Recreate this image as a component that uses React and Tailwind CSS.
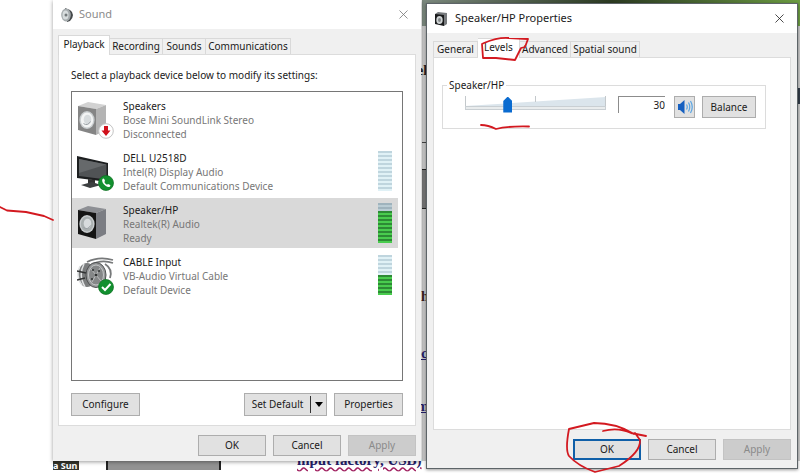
import React from "react";
import { X } from "lucide-react";

const BUTTON =
  "flex items-center justify-center border border-[#adadad] bg-[#e1e1e1] text-[#1a1a1a] whitespace-nowrap";

const SEGMENTS = [0, 1, 2, 3, 4, 5, 6, 7, 8, 9];

const DEVICES = [
  { name: "Speakers", driver: "Bose Mini SoundLink Stereo", status: "Disconnected", Icon: FadedSpeaker, level: null },
  { name: "DELL U2518D", driver: "Intel(R) Display Audio", status: "Default Communications Device", Icon: Monitor, level: 0 },
  { name: "Speaker/HP", driver: "Realtek(R) Audio", status: "Ready", Icon: Speaker, level: 8, selected: true },
  { name: "CABLE Input", driver: "VB-Audio Virtual Cable", status: "Default Device", Icon: Cable, level: 5 },
];

function SpeakerBox({ front, side, top, cone }) {
  return (
    <>
      <path d="M1 7 L11 3 L29 6 L19 10 Z" fill={top} />
      <path d="M19 10 L29 6 V31 L19 36 Z" fill={side} />
      <path d="M1 7 L19 10 V36 L1 31 Z" fill={front} />
      <ellipse cx="10" cy="21" rx="7.6" ry="9" fill="#c9cdcf" />
      <ellipse cx="10" cy="21" rx="6.2" ry="7.6" fill={cone} />
      <ellipse cx="10.5" cy="20.5" rx="3.8" ry="4.8" fill="#d7dbdd" />
      <path d="M6.500 24.500 Q10.500 27.500 13.500 22.500" fill="none" stroke="#9ba1a5" strokeWidth="1" />
    </>
  );
}

function FadedSpeaker() {
  return (
    <svg viewBox="0 0 38 40" className="h-10 w-[38px]" aria-hidden="true">
      <SpeakerBox front="#858585" side="#b4b4b4" top="#d2d2d2" cone="#f3f4f4" />
      <circle cx="29" cy="32" r="7.3" fill="#fff" stroke="#c4c4c4" />
      <path d="M27 27 h4 v4.500 h2.500 L29 37 L24.500 31.500 H27 Z" fill="#d0101b" />
    </svg>
  );
}

function Speaker() {
  return (
    <svg viewBox="0 0 38 40" className="h-10 w-[38px]" aria-hidden="true">
      <SpeakerBox front="#141414" side="#7b7d83" top="#8d8f94" cone="#aab0b1" />
    </svg>
  );
}

function Monitor() {
  return (
    <svg viewBox="0 0 38 40" className="h-10 w-[38px]" aria-hidden="true">
      <path d="M0 5 L31 12 V31 L0 27 Z" fill="#1d1f20" />
      <path d="M2 8 L29.500 13.500 V28.500 L2 25 Z" fill="#505355" />
      <path d="M2 8 L29.500 13.500 L2 22 Z" fill="#66696b" />
      <path d="M11 28 L18 29 V34 L11 33 Z" fill="#333" />
      <path d="M4 34 L15 31 L24 34 L13 37 Z" fill="#3c3f40" />
      <circle cx="29" cy="32" r="7.500" fill="#12902f" stroke="#0b6f20" strokeWidth="0.700" />
      <path d="M25.500 28 Q26.500 27 27.500 28.500 L28 30 L27.300 31 Q28.300 33 30 33.800 L31 33 L32.800 33.700 Q34 34.500 33 35.500 Q31.500 37 28.500 34.800 Q24 31 25.500 28 Z" fill="#fff" />
    </svg>
  );
}

function Cable() {
  return (
    <svg viewBox="0 0 38 40" className="h-10 w-[38px]" aria-hidden="true">
      <path d="M10 7 Q22 1 36 5 M14 10 Q24 4 36 8 M28 9 Q36 14 33 23" fill="none" stroke="#77797a" strokeWidth="1.800" />
      <ellipse cx="10" cy="20" rx="9" ry="12" fill="#7b7d7e" />
      <path d="M3 11 Q-2 20 5 30 M7 9 Q1 20 8 32" fill="none" stroke="#e2e4e5" strokeWidth="1.500" />
      <path d="M0 16 L9 18 M0 25 L8 23" stroke="#303232" strokeWidth="1.500" />
      <ellipse cx="19" cy="20" rx="10" ry="12.500" fill="#969899" stroke="#4d4f50" />
      <ellipse cx="19" cy="20" rx="7.500" ry="10" fill="#858788" stroke="#c5c7c8" />
      <path d="M14 14 L24 26 M23 13 L15 27" stroke="#b9bbbc" />
      <g fill="#2e3030">
        <circle cx="16" cy="15" r="1" />
        <circle cx="22" cy="16" r="1" />
        <circle cx="19" cy="20" r="1.200" />
        <circle cx="15" cy="24" r="1" />
      </g>
      <circle cx="29" cy="32" r="7.500" fill="#12902f" stroke="#0b6f20" strokeWidth="0.700" />
      <path d="M25 32 L28 35 L33.500 29" fill="none" stroke="#fff" strokeWidth="2" />
    </svg>
  );
}

function Meter({ level, selected }) {
  const off = selected
    ? "h-1 border-t-2 border-[#9fb3bd] bg-[#b9ccd4]"
    : "h-1 border-t-2 border-[#bfd5de] bg-[#e0f1f6]";
  return (
    <div className="flex w-3.5 flex-col">
      {SEGMENTS.map((i) => (
        <div
          key={i}
          className={i >= SEGMENTS.length - level ? "h-1 border-t-2 border-[#2d8a35] bg-[#49cc4e]" : off}
        />
      ))}
    </div>
  );
}

function TitleIcon({ round }) {
  return round ? (
    <svg viewBox="0 0 12 14" className="h-3.5 w-3" aria-hidden="true">
      <path d="M4 0 L9 2 Q12 4 12 7 Q12 10 9 13 L6 14 Z" fill="#45494b" />
      <ellipse cx="5" cy="7" rx="4.800" ry="6.500" fill="#a5abad" />
      <ellipse cx="4.500" cy="7" rx="3" ry="4.500" fill="#d7dcdd" />
      <circle cx="5" cy="7" r="1.500" fill="#73797b" />
    </svg>
  ) : (
    <svg viewBox="0 0 12 14" className="h-3.5 w-3" aria-hidden="true">
      <path d="M0 2 L3 0 L12 1 V12 L9 14 Z" fill="#777a7d" />
      <path d="M0 2 L9 3 V14 L0 12 Z" fill="#191a1b" />
      <ellipse cx="4.500" cy="8" rx="3.200" ry="4" fill="#cfd3d4" />
      <ellipse cx="4.500" cy="8" rx="1.500" ry="2" fill="#85898b" />
    </svg>
  );
}

function Tabs({ items, active, first }) {
  return (
    <div role="tablist" className="flex items-end">
      {items.map(([label, width]) => (
        <button
          key={label}
          role="tab"
          aria-selected={label === active}
          className={`${width} ${
            label === active
              ? "relative -mb-px h-5 border-b-0 bg-white pb-0.5"
              : "h-4 bg-[#f0f0f0]"
          } ${label === first ? "border-l" : ""} flex items-center justify-center border-t border-r border-[#d9d9d9] whitespace-nowrap`}
        >
          {label}
        </button>
      ))}
    </div>
  );
}

function Footer({ focused }) {
  return (
    <div className="flex justify-end gap-[7px]">
      <button className={`${BUTTON} h-[21px] w-[68px] ${focused ? "outline-2 -outline-offset-2 outline-[#0f5fa8]" : ""}`}>OK</button>
      <button className={`${BUTTON} h-[21px] w-[68px]`}>Cancel</button>
      <button disabled className="flex h-[21px] w-[68px] items-center justify-center border border-[#c3c3c3] bg-[#cccccc] text-[#8a8a8a]">
        Apply
      </button>
    </div>
  );
}

function SoundDialog() {
  return (
    <section aria-label="Sound" className="relative ml-[53px] flex min-w-0 flex-[369] flex-col self-start bg-[#f0f0f0] shadow-[0_1px_4px_rgba(0,0,0,0.4)]">
      <header className="flex h-[29px] items-center gap-1.5 bg-white pr-2.5 pl-2">
        <TitleIcon round />
        <h1 className="flex-1 text-[11px] text-[#8b8b8b]">Sound</h1>
        <button aria-label="Close">
          <X size={15} strokeWidth={1.3} className="text-[#777]" />
        </button>
      </header>
      <div className="px-[5px] pt-1.5 pb-[5px]">
        <Tabs
          active="Playback"
          first="Playback"
          items={[
            ["Playback", "w-[52px]"],
            ["Recording", "w-[53px]"],
            ["Sounds", "w-[43px]"],
            ["Communications", "w-[85px]"],
          ]}
        />
        <div className="mb-[9px] border border-[#dcdcdc] bg-white px-3 pt-[13px] pb-[9px]">
          <p className="mb-[9px] leading-[14px]">Select a playback device below to modify its settings:</p>
          <ul role="listbox" aria-label="Playback devices" className="min-h-[290px] border border-[#767676] pt-0.5">
            {DEVICES.map(({ name, driver, status, Icon, level, selected }) => (
              <li
                key={name}
                role="option"
                aria-selected={!!selected}
                className={`mr-1 flex h-[52px] items-start gap-2 border-b-2 border-white pt-[5px] pr-[6px] pl-[5px] ${selected ? "bg-[#d9d9d9]" : ""}`}
              >
                <Icon />
                <div className="min-w-0 flex-1 leading-[14px] whitespace-nowrap">
                  <p className="text-[#1a1a1a]">{name}</p>
                  <p className="text-[#777]">{driver}</p>
                  <p className="text-[#777]">{status}</p>
                </div>
                {level !== null && <Meter level={level} selected={selected} />}
              </li>
            ))}
          </ul>
          <div className="mt-3 flex gap-[7px]">
            <button className={`${BUTTON} mr-auto h-[23px] w-[69px]`}>Configure</button>
            <div className="flex h-[23px] w-[83px] border border-[#adadad] bg-[#e1e1e1]">
              <button className="flex-1">Set Default</button>
              <button aria-label="More defaults" className="my-0.5 flex w-4 items-center justify-center border-l border-[#333]">
                <svg viewBox="0 0 10 5" className="h-[5px] w-2.5" aria-hidden="true">
                  <path d="M1 0 H9 L5 5 Z" fill="#000" />
                </svg>
              </button>
            </div>
            <button className={`${BUTTON} h-[23px] w-[69px]`}>Properties</button>
          </div>
        </div>
        <Footer />
      </div>
    </section>
  );
}

function LevelSlider() {
  return (
    <div className="relative h-[17px] min-w-0 flex-1">
      <svg viewBox="0 0 139 17" preserveAspectRatio="none" className="h-full w-full" aria-hidden="true">
        <path d="M0 10 L139 1 V11 H0 Z" fill="#dbe5ec" />
        <path d="M0.500 0 V10 M69.500 0 V6 M138.500 0 V10" stroke="#c3c8cb" />
        <rect x="0.500" y="10.500" width="138" height="3" fill="#e9eced" stroke="#c9cfd3" />
      </svg>
      <input
        type="range"
        aria-label="Speaker/HP level"
        defaultValue="29"
        className="absolute inset-0 h-full w-full appearance-none bg-transparent [&::-webkit-slider-thumb]:h-4 [&::-webkit-slider-thumb]:w-[9px] [&::-webkit-slider-thumb]:appearance-none [&::-webkit-slider-thumb]:bg-[#0a6bd0] [&::-webkit-slider-thumb]:[clip-path:polygon(50%_0,100%_28%,100%_100%,0_100%,0_28%)]"
      />
    </div>
  );
}

function PropertiesDialog() {
  return (
    <section aria-label="Speaker/HP Properties" className="relative mt-[3px] mr-[2px] ml-[5px] flex min-w-0 flex-[371] flex-col self-start border border-[#5d6468] bg-[#f0f0f0] shadow-[0_1px_3px_rgba(0,0,0,0.4)]">
      <header className="flex h-[29px] items-center gap-2 bg-white pr-2.5 pl-2">
        <TitleIcon />
        <h1 className="flex-1 text-[11px] text-[#1a1a1a]">Speaker/HP Properties</h1>
        <button aria-label="Close">
          <X size={15} strokeWidth={1.3} className="text-[#222]" />
        </button>
      </header>
      <div className="px-1.5 pt-[5px] pb-2">
        <Tabs
          active="Levels"
          first="General"
          items={[
            ["General", "w-[45px]"],
            ["Levels", "w-[42px]"],
            ["Advanced", "w-[51px]"],
            ["Spatial sound", "w-[69px]"],
          ]}
        />
        <div className="mb-[9px] min-h-[373px] border border-[#dcdcdc] bg-white pt-5 pr-6 pl-2">
          <fieldset className="border border-[#dcdcdc] pr-[9px] pb-2.5 pl-[22px]">
            <legend className="-ml-[18px] px-0.5 leading-[14px]">Speaker/HP</legend>
            <div className="flex items-start pt-1">
              <LevelSlider />
              <input
                aria-label="Level"
                defaultValue="30"
                className="ml-3 h-[17px] w-[47px] border-t border-l border-[#8c8c8c] bg-white text-right"
              />
              <button aria-label="Mute" className={`${BUTTON} ml-[9px] h-[22px] w-[21px]`}>
                <svg viewBox="0 0 16 16" className="size-4" aria-hidden="true">
                  <path d="M1 5 H3 L7.500 1 V15 L3 11 H1 Z" fill="#1660c0" />
                  <path d="M9.500 5.500 Q11 8 9.500 10.500 M11.500 3.500 Q14 8 11.500 12.500 M13.500 2 Q17 8 13.500 14" fill="none" stroke="#58a4e4" strokeWidth="1.200" />
                </svg>
              </button>
              <button className={`${BUTTON} ml-[7px] h-[22px] w-[54px]`}>Balance</button>
            </div>
          </fieldset>
        </div>
        <Footer focused />
      </div>
    </section>
  );
}

// Slivers of the document that stay visible around the two windows
function Backdrop() {
  return (
    <div aria-hidden="true" className="absolute inset-0 overflow-hidden font-['Liberation_Serif',serif] text-[14px] font-bold text-[#25206b]">
      <div className="absolute top-0 right-0 bottom-0 left-[422px] bg-[#c9c9c9]" />
      <div className="absolute top-0 right-0 left-[422px] h-[26px] bg-linear-to-r from-[#7d8a80] via-[#2c3b22] to-[#6c9c42]" />
      <div className="absolute top-[142px] left-[422px] h-px w-1.5 bg-[#444]" />
      <div className="absolute top-[169px] left-[422px] h-10 w-1.5 border-y border-[#222] bg-[#777]" />
      <div className="absolute top-[88px] right-0 h-4 w-1 bg-[#333c48]" />
      <span className="absolute top-[60px] left-[417px] text-[#222]">el</span>
      <span className="absolute top-[286px] left-[421px] text-[#3a2020]">h</span>
      <span className="absolute top-[343px] left-[415px] underline">ec</span>
      <span className="absolute top-[396px] left-[417px] underline">m</span>
      <div className="absolute right-0 bottom-0 left-0 h-3 bg-white" />
      <div className="absolute bottom-[3px] left-[53px] h-[9px] bg-[#34352c] pr-0.5 font-['Noto_Sans',sans-serif] text-[9px] leading-[9px] whitespace-nowrap text-white">
        a Sun
      </div>
      <div className="absolute bottom-[3px] left-[106px] h-[9px] w-[115px] border-x-2 border-[#222] bg-[#929292]" />
      <span className="absolute bottom-[5px] left-[297px] text-[15px] leading-4 whitespace-nowrap underline decoration-[#a02060] decoration-wavy">
        input factory, USB)
      </span>
    </div>
  );
}

function Markup() {
  return (
    <svg viewBox="0 0 800 473" width="800" height="473" className="pointer-events-none absolute top-0 left-0" aria-hidden="true">
      <g fill="none" stroke="#d31920" strokeWidth="1.800" strokeLinecap="round" strokeLinejoin="round">
        <path d="M0 207 L7 210.500 L26 212 L44 216 L53 220" />
        <path d="M484 43 Q498 37 509 38 L528 39 L525 47 L521 48 L515 60 L496 58 L483 58 L482 44 Z" />
        <path d="M481 125 Q488 125 496 129 Q507 126 529 126.500" />
        <path d="M603 431 Q618 427 631 433 L646 436 M634 434 Q616 423 594 423 L569 429 Q565 450 569 456 Q578 466 595 472 L619 466 Q641 452 640 440 L635 433" />
      </g>
    </svg>
  );
}

export default function App() {
  return (
    <main className="relative flex min-h-screen overflow-hidden bg-white font-['Noto_Sans','Open_Sans',sans-serif] text-[10px] text-[#1a1a1a]">
      <Backdrop />
      <SoundDialog />
      <PropertiesDialog />
      <Markup />
    </main>
  );
}
